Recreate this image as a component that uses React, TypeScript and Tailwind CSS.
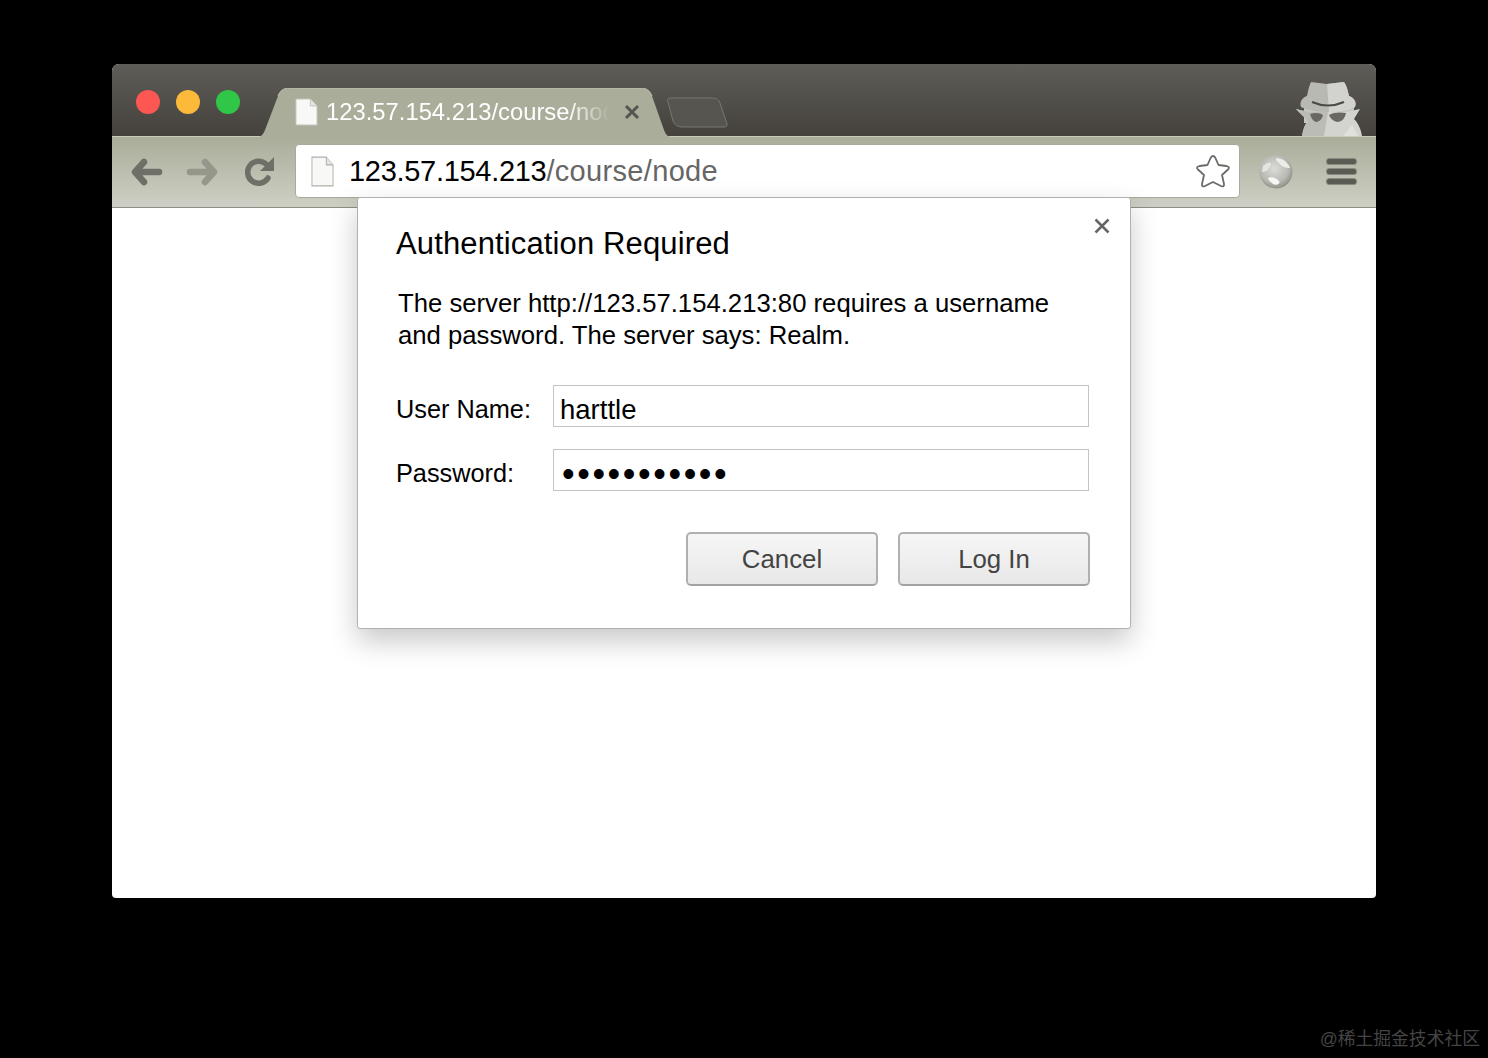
import { FC } from "react";

const FileIcon: FC<{ className?: string; edge?: string }> = ({ className, edge = "#c4c5bd" }) => (
  <svg viewBox="0 0 24 28" preserveAspectRatio="none" className={className}>
    <path d="M1 1H16L23 8V27H1Z" fill="#f8f8f6" stroke={edge} strokeWidth="1" />
    <path d="M16 1V8H23" fill="#e4e4e0" stroke={edge} strokeWidth="1" />
  </svg>
);

const Arrow: FC<{ color: string; flip?: boolean }> = ({ color, flip }) => (
  <svg viewBox="0 0 32 28" className={flip ? "w-8 h-7 -scale-x-100" : "w-8 h-7"}>
    <path
      d="M13 4L4 14L13 24M5 14H28"
      fill="none"
      stroke={color}
      strokeWidth="6.5"
      strokeLinecap="round"
      strokeLinejoin="round"
    />
  </svg>
);

const Incognito = () => (
  <svg viewBox="0 0 66 55" className="w-[66px] h-[55px]">
    <path d="M8 20H58V42H8Z" fill="#c6c6c2" />
    <path d="M15 1L31 3L48 1C51 5 52 11 53 15C58 17 61 21 59 26C55 29 44 31 33 31C22 31 10 29 5 26C3 21 7 16 11 15C12 10 13 5 15 1Z" fill="#b9b9b4" />
    <path d="M31 3L48 1C51 5 52 11 53 15C58 17 61 21 59 26C55 29 44 31 33 31Z" fill="#d2d2ce" />
    <path d="M16 21Q32 28 48 21" fill="none" stroke="#4c4a45" strokeWidth="2" />
    <path d="M0 28C6 30 14 31 20 31L32 31H50L64 28L58 38C62 42 65 48 66 55H6C7 48 9 43 12 40Z" fill="#d3d3cf" />
    <path d="M0 28C6 30 14 31 20 31L32 31L28 55H6C7 48 9 43 12 40Z" fill="#bcbcb7" />
    <path d="M14 33C19 31 25 32 27 34C26 39 22 41 20 41C17 40 15 37 14 33Z" fill="#6a6862" />
    <path d="M33 34C37 31 45 31 50 32C49 37 46 41 41 41C37 40 34 37 33 34Z" fill="#6a6862" />
    <path d="M47 55L56 44L62 55Z" fill="#e0e0dc" />
  </svg>
);

const Globe = () => (
  <svg viewBox="0 0 34 36" className="w-[34px] h-9">
    <defs>
      <radialGradient id="globe" cx="0.45" cy="0.4" r="0.6">
        <stop offset="0" stopColor="#dcdcd8" />
        <stop offset="0.7" stopColor="#b9b9b4" />
        <stop offset="1" stopColor="#8f9087" />
      </radialGradient>
    </defs>
    <circle cx="17" cy="18" r="16.5" fill="url(#globe)" />
    <path d="M9 24C13 22 17 24 20 27C22 30 17 32 14 30C12 28 10 27 9 24Z" fill="#f6f6f4" />
    <path d="M17 4C23 4 29 8 31 14C26 14 22 12 20 9C18 8 17 6 17 4Z" fill="#ecece9" />
    <path d="M4 12C7 9 10 8 12 9C12 13 8 18 3 18Z" fill="#e4e4e0" />
  </svg>
);

const MenuBar = () => <div className="w-[31px] h-[7px] rounded-[3px] bg-[#5a5b53] border border-[#8b8c81]" />;

const labelCls = "w-[157px] h-[42px] shrink-0 text-[25.3px] leading-[48px] text-black";
const inputCls = "flex-1 h-[42px] border border-[#c4c4c4] bg-white pr-[6px] pt-[8px] text-black outline-none";
const btnCls =
  "w-[192px] h-[54px] rounded-[5px] border-2 border-[#b0b0b0] border-b-[#a2a2a2] bg-linear-to-b from-[#f6f6f6] to-[#e8e8e8] text-[25.8px] text-[#444]";

export default function App() {
  return (
    <div className="h-[1058px] bg-black flex flex-col px-[112px] pt-[64px] font-['Liberation_Sans',Arial,sans-serif] overflow-hidden">
      <div className="relative h-[834px] rounded-t-[7px] rounded-b-[4px] overflow-hidden bg-white flex flex-col">
        {/* title strip */}
        <div className="relative h-[72px] shrink-0 bg-linear-to-b from-[#5f5d57] to-[#45423e] flex items-start">
          <div className="flex gap-4 ml-6 mt-[26px]">
            <div className="w-6 h-6 rounded-full bg-[#fc5753]" />
            <div className="w-6 h-6 rounded-full bg-[#fdb93a]" />
            <div className="w-6 h-6 rounded-full bg-[#30c748]" />
          </div>
          <div className="relative ml-5 mt-6 w-[412px] h-[49px] flex items-center pl-[35px] pr-[26px]">
            <svg viewBox="0 0 412 49" className="absolute inset-0 w-full h-full">
              <path
                d="M-4 49C1 49 3 47 5 42L18 8C20 3 23 0 30 0H380C387 0 390 3 392 8L404 42C406 47 408 49 412 49Z"
                fill="#a9ad99"
              />
              <path d="M18 8C20 3 23 0 30 0H380C387 0 390 3 392 8" fill="none" stroke="#c2c4b5" strokeWidth="1" />
            </svg>
            <FileIcon className="relative w-[23px] h-[28px] shrink-0 mb-[1px]" />
            <div className="relative ml-2 w-[285px] whitespace-nowrap overflow-hidden text-[23.8px] text-white mask-r-from-[85%] mask-r-to-100% pb-[1px]">
              123.57.154.213/course/node
            </div>
            <svg viewBox="0 0 16 16" className="relative ml-[13px] w-[16px] h-[16px] shrink-0 mb-[1px]">
              <path d="M2 2L14 14M14 2L2 14" stroke="#54554e" strokeWidth="3" />
            </svg>
          </div>
          <svg viewBox="0 0 62 31" className="w-[62px] h-[31px] -ml-[6px] mt-[33px]">
            <path d="M5 1H46C51 1 53 3 54 6L61 27C61.500 29 60 30 58 30H17C11 30 9 28 7 24L2 5C1 2 2 1 5 1Z" fill="#57554f" stroke="#78776e" strokeWidth="1" />
          </svg>
          <div className="ml-auto mr-[14px] mt-[17px]">
            <Incognito />
          </div>
        </div>

        {/* toolbar */}
        <div className="h-[72px] shrink-0 bg-linear-to-b from-[#a9ad99] to-[#cfd0c5] border-t border-[#c9cabd] border-b border-b-[#8d8d86] flex items-center pl-[19px] pr-[19px] pb-[1px]">
          <Arrow color="#6e7068" />
          <div className="ml-[23px]">
            <Arrow color="#94978a" flip />
          </div>
          <svg viewBox="0 0 30 30" className="ml-[27px] w-[30px] h-[30px]">
            <path d="M23 21A11 11 0 1 1 21 7" fill="none" stroke="#6e7068" strokeWidth="5.500" strokeLinecap="round" />
            <path d="M15 14H29V0Z" fill="#6e7068" />
          </svg>
          <div className="self-start mt-[7px] ml-[20px] w-[945px] h-[54px] rounded-[4px] bg-white border border-[#a9aa9d] flex items-center pl-[15px] pr-[8px]">
            <FileIcon edge="#b0b0aa" className="w-[23px] h-[31px] shrink-0" />
            <div className="ml-[15px] pt-[1px] text-[29px] text-black whitespace-nowrap tracking-[-0.3px]">
              123.57.154.213<span className="text-[#666] tracking-[0.33px]">/course/node</span>
            </div>
            <svg viewBox="0 0 36 35" className="ml-auto w-9 h-[35px]">
              <path
                d="M15.800 3.500Q18 0.500 20.200 3.500L23.500 11L31.500 12Q35.500 13 33 15.500L27 21L29 30Q29.500 33.500 26 32L18 28L10 32Q6.500 33.500 7 30L9 21L3 15.500Q0.500 13 4.500 12L12.500 11Z"
                fill="#fff"
                stroke="#6a6a66"
                strokeWidth="1.800"
                strokeLinejoin="round"
              />
            </svg>
          </div>
          <div className="ml-[19px]">
            <Globe />
          </div>
          <div className="ml-[33px] flex flex-col gap-[3px]">
            <MenuBar />
            <MenuBar />
            <MenuBar />
          </div>
        </div>

        {/* auth dialog */}
        <div className="absolute left-[245px] top-[133px] w-[774px] h-[432px] bg-white border border-[#b0b0b0] rounded-[3px] shadow-[0_12px_28px_rgba(0,0,0,0.22)] pl-[38px] pr-[41px] pt-[25px]">
          <svg viewBox="0 0 16 16" className="absolute right-[20px] top-[20px] w-[16px] h-[16px]">
            <path d="M1.500 1.500L14.500 14.500M14.500 1.500L1.500 14.500" stroke="#666" strokeWidth="2.500" />
          </svg>
          <div className="text-[31px] leading-[42px] tracking-[0.13px] text-black">Authentication Required</div>
          <div className="mt-[22px] ml-[2px] text-[25.7px] leading-[32px] text-black">
            The server http://123.57.154.213:80 requires a username
            <br />
            and password. The server says: Realm.
          </div>
          <div className="mt-[34px] flex">
            <div className={labelCls}>User Name:</div>
            <input readOnly value="harttle" className={inputCls + " pl-[6px] text-[27.5px]"} />
          </div>
          <div className="mt-[22px] flex">
            <div className={labelCls}>Password:</div>
            <input readOnly type="password" value="12345678901" className={inputCls + " pl-[8px] text-[36px] tracking-[2.6px]"} />
          </div>
          <div className="mt-[41px] flex justify-end gap-5 -mr-[1px]">
            <button className={btnCls}>Cancel</button>
            <button className={btnCls}>Log In</button>
          </div>
        </div>
      </div>
      <div className="mt-[129px] -mr-[104px] text-right text-[17.8px] leading-6 text-[#454545] font-['Liberation_Sans','Noto_Sans_CJK_SC',sans-serif]">
        @稀土掘金技术社区
      </div>
    </div>
  );
}
